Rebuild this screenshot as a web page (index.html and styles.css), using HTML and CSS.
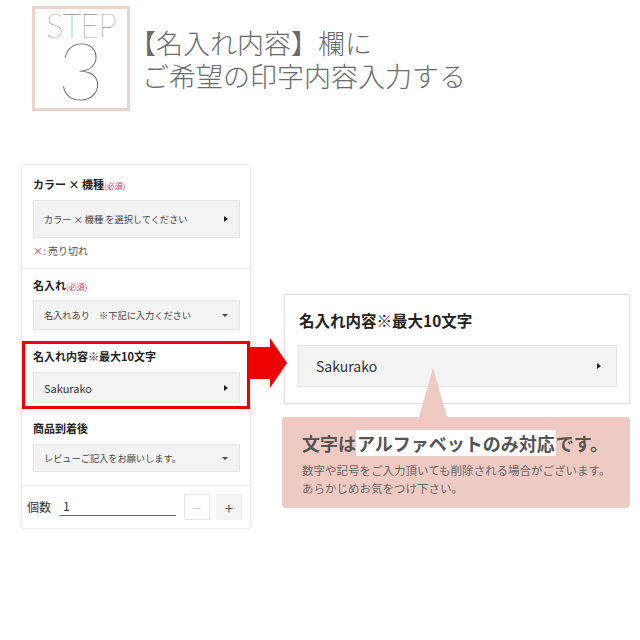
FILE: index.html
```html
<!DOCTYPE html>
<html lang="ja">
<head>
  <meta charset="UTF-8">
  <meta name="viewport" content="width=device-width, initial-scale=1.0">
  <title>STEP 3 名入れ内容</title>
  <link rel="stylesheet" href="styles.css">
</head>
<body>
  <header class="step-head">
    <div class="step-box">
      <span class="step-label">STEP</span>
      <span class="step-num">3</span>
    </div>
    <h1 class="step-title">【名入れ内容】欄に<br>ご希望の印字内容入力する</h1>
  </header>

  <main class="demo">
    <!-- product form, as shown on the shop page -->
    <section class="form-panel">
      <div class="field field-first">
        <p class="field-label">カラー&nbsp;× 機種<span class="required">(必須)</span></p>
        <div class="select select-tall">
          <span>カラー × 機種 を選択してください</span>
          <i class="caret-right"></i>
        </div>
        <p class="soldout"><span class="soldout-mark">×</span>: 売り切れ</p>
      </div>

      <div class="field field-name">
        <p class="field-label">名入れ<span class="required">(必須)</span></p>
        <div class="select">
          <span>名入れあり　※下記に入力ください</span>
          <i class="caret-down"></i>
        </div>
      </div>

      <div class="field field-marked">
        <p class="field-label">名入れ内容※最大10文字</p>
        <div class="select select-mid">
          <span class="select-value">Sakurako</span>
          <i class="caret-right"></i>
        </div>
      </div>

      <div class="field field-after">
        <p class="field-label">商品到着後</p>
        <div class="select">
          <span>レビューご記入をお願いします。</span>
          <i class="caret-down"></i>
        </div>
      </div>

      <div class="qty">
        <span class="qty-label">個数</span>
        <span class="qty-input">1</span>
        <span class="qty-btn qty-minus">−</span>
        <span class="qty-btn qty-plus">+</span>
      </div>
    </section>

    <svg class="arrow" width="39" height="50" viewBox="0 0 39 50">
      <polygon points="0,9 21,9 21,0 38,25 21,50 21,41 0,41" fill="#ec0000"/>
    </svg>

    <div class="detail">
      <div class="detail-card">
        <p class="detail-label">名入れ内容※最大10文字</p>
        <div class="detail-input">
          <span>Sakurako</span>
          <i class="caret-right"></i>
        </div>
      </div>

      <div class="notice">
        <p class="notice-title">文字は<span class="notice-mark">アルファベットのみ対応</span>です。</p>
        <p class="notice-text">数字や記号をご入力頂いても削除される場合がございます。<br>あらかじめお気をつけ下さい。</p>
      </div>
    </div>
  </main>
</body>
</html>
```

FILE: styles.css
```css
* {
  margin: 0;
  padding: 0;
  box-sizing: border-box;
}

body {
  width: 640px;
  height: 640px;
  background-color: white;
  color: #333;
  font-family: "Noto Sans CJK JP", "Noto Sans", sans-serif;
  overflow: hidden;
}

/* header */
.step-head {
  display: flex;
  align-items: flex-start;
  gap: 12px;
  padding: 6px 0 0 32px;
}

.step-box {
  width: 98px;
  height: 105px;
  border: 3px solid #ecd4cd;
  display: flex;
  flex-direction: column;
  align-items: center;
  color: #666;
  font-family: Lato, "Liberation Sans", sans-serif;
  font-weight: 100;
}

.step-label {
  font-size: 33px;
  line-height: 26px;
  margin-top: 3px;
  letter-spacing: -1px;
}

.step-num {
  font-size: 80px;
  line-height: 60px;
  margin-top: 1px;
}

.step-title {
  margin-top: 20px;
  font-size: 27px;
  line-height: 33px;
  font-weight: 300;
  color: #6a6a6a;
  text-indent: -13px;
}

/* demo area */
.demo {
  position: relative;
  display: flex;
  align-items: flex-start;
  margin-top: 54px;
  padding-left: 22px;
}

.form-panel {
  width: 228px;
  background: white;
  box-shadow: 0 0 4px rgba(0, 0, 0, 0.16);
}

.field {
  padding: 0 10px 0 11px;
}

.field-label {
  height: 16px;
  font-size: 11px;
  line-height: 16px;
  font-weight: bold;
  color: #222;
  margin-bottom: 8px;
  white-space: nowrap;
}

.required {
  font-size: 8px;
  line-height: 10px;
  color: #d4335a;
  font-weight: normal;
}

.select {
  height: 30px;
  display: flex;
  align-items: center;
  justify-content: space-between;
  padding: 0 11px 0 10px;
  background: #f3f3f3;
  border: 1px solid #e6e6e6;
  font-size: 9.2px;
  line-height: 14px;
  color: #444;
}

.select-tall {
  height: 38px;
}

.select-mid {
  height: 31px;
}

.select-value {
  font-size: 11px;
  color: #333;
}

.caret-right {
  width: 0;
  height: 0;
  border-left: 4px solid #222;
  border-top: 3px solid transparent;
  border-bottom: 3px solid transparent;
}

.caret-down {
  width: 0;
  height: 0;
  border-top: 3px solid #444;
  border-left: 3px solid transparent;
  border-right: 3px solid transparent;
}

.field-first {
  padding-top: 11px;
  padding-bottom: 9px;
  border-bottom: 1px solid #eee;
}

.soldout {
  height: 16px;
  margin-top: 5px;
  font-size: 10px;
  line-height: 16px;
  color: #555;
}

.soldout-mark {
  color: #d4335a;
}

.field-name {
  padding-top: 8px;
  padding-bottom: 11px;
}

.field-name .field-label {
  margin-bottom: 7px;
}

.field-marked {
  border: 3px solid #ec0000;
  padding: 4px 7px 3px 8px;
}

.field-after {
  padding-top: 11px;
  padding-bottom: 13px;
  border-bottom: 1px solid #eee;
}

.field-after .select {
  height: 28px;
}

.qty {
  height: 42px;
  display: flex;
  align-items: center;
  padding: 0 8px 0 5px;
  font-size: 12px;
  color: #333;
}

.qty-label {
  flex: none;
  white-space: nowrap;
  line-height: 16px;
}

.qty-input {
  flex: none;
  width: 116px;
  margin: 0 8px 0 9px;
  padding: 0 0 1px 3px;
  border-bottom: 1px solid #666;
  line-height: 16px;
}

.qty-btn {
  flex: none;
  width: 26px;
  height: 26px;
  display: flex;
  align-items: center;
  justify-content: center;
  font-size: 15px;
}

.qty-minus {
  border: 1px solid #e6e6e6;
  color: #ccc;
  margin-right: 6px;
}

.qty-plus {
  background: #f3f3f3;
  color: #555;
}

.arrow {
  position: absolute;
  left: 249px;
  top: 173px;
}

/* enlarged view */
.detail {
  width: 348px;
  margin: 129px 0 0 32px;
}

.detail-card {
  margin-left: 2px;
  border: 1px solid #e0e0e0;
  box-shadow: 0 0 3px rgba(0, 0, 0, 0.08);
  padding: 14px 12px 16px 13px;
  background: white;
}

.detail-label {
  font-size: 15.5px;
  line-height: 22px;
  font-weight: bold;
  color: #222;
  margin: 0 0 14px 1px;
}

.detail-input {
  height: 42px;
  display: flex;
  align-items: center;
  justify-content: space-between;
  padding: 0 15px 0 17px;
  background: #f3f3f3;
  border: 1px solid #e3e3e3;
  font-size: 14px;
  color: #333;
}

.notice {
  position: relative;
  margin-top: 13px;
  height: 91px;
  padding: 13px 10px 0 20px;
  background: #efcac2;
  border-radius: 4px;
}

.notice::before {
  content: "";
  position: absolute;
  left: 137px;
  top: -49px;
  width: 28px;
  height: 49px;
  background: #efcac2;
  clip-path: polygon(50% 0, 100% 100%, 0 100%);
}

.notice-title {
  font-size: 18px;
  line-height: 26px;
  font-weight: bold;
  color: #555;
  margin-bottom: 5px;
}

.notice-mark {
  background: white;
  padding: 0 1px;
}

.notice-text {
  font-size: 11.5px;
  line-height: 18px;
  color: #666;
}
```
